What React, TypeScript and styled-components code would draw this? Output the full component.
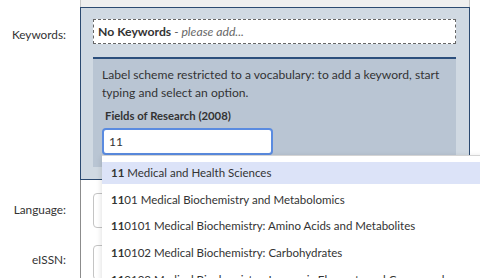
import styled, { createGlobalStyle } from 'styled-components';

const GlobalStyle = createGlobalStyle`
  body {
    margin: 0;
    background: #fff;
    font-family: Lato, "Open Sans", Arial, sans-serif;
    font-size: 12px;
    color: #333;
  }
`;

const Form = styled.div`
  display: grid;
  grid-template-columns: 80px 390px;
  grid-template-rows: 7px 173px 52px 52px;
  width: 480px;
  height: 278px;
  overflow: hidden;
`;

const Label = styled.div<{ top: number }>`
  text-align: right;
  padding-right: 14px;
  padding-top: ${(p) => p.top}px;
  line-height: 18px;
  font-size: 11.8px;
  color: #333;
`;

const TopStrip = styled.div`
  background: #efefef;
  border-left: 1px solid #c8c8c8;
  border-right: 1px solid #c8c8c8;
`;

const Panel = styled.div`
  position: relative;
  background: #d0d9e2;
  border: 1px solid #2c4a70;
  padding: 11px 13px 12px 12px;
`;

const Placeholder = styled.div`
  height: 23px;
  line-height: 23px;
  background: #fff;
  border: 1px dashed #666;
  padding-left: 4px;
  font-size: 12.2px;
  b {
    font-weight: 700;
    color: #333;
  }
  i {
    color: #666;
  }
`;

const Scheme = styled.div`
  margin-top: 13px;
  background: #b9c5d3;
  border-top: 2px solid #2c4f7c;
  padding: 7px 9px 12px 9px;
`;

const Help = styled.p`
  margin: 0;
  line-height: 18px;
  font-size: 12.1px;
  color: #333;
`;

const SchemeName = styled.div`
  margin-top: 5px;
  padding-left: 3px;
  font-weight: 700;
  font-size: 11.3px;
  line-height: 18px;
`;

const SearchBox = styled.div`
  margin-top: 3px;
  width: 162px;
  height: 23px;
  line-height: 23px;
  border: 2px solid #5a8be0;
  border-radius: 4px;
  background: #fff;
  padding-left: 5px;
  font-size: 12px;
`;

const Menu = styled.ul`
  position: absolute;
  left: 21px;
  top: 147px;
  width: 400px;
  margin: 0;
  padding: 6px 0 0 0;
  list-style: none;
  background: #fff;
  border-top: 1px solid #d4d4d4;
  box-shadow: 0 2px 6px rgba(0, 0, 0, 0.15);
  z-index: 2;
`;

const Option = styled.li<{ active?: boolean }>`
  height: 22px;
  line-height: 22px;
  margin-bottom: 4.7px;
  padding-left: 9px;
  font-size: 11.5px;
  white-space: nowrap;
  background: ${(p) => (p.active ? '#dce3f8' : 'transparent')};
  b {
    font-weight: 700;
  }
`;

const Field = styled.div`
  border-left: 1px solid #8c8c8c;
  padding: 13px 0 0 12px;
`;

const Input = styled.div`
  width: 220px;
  height: 33px;
  border: 1px solid #c4c4c4;
  border-radius: 4px;
  background: #fff;
`;

const options = [
  'Medical and Health Sciences',
  '01 Medical Biochemistry and Metabolomics',
  '0101 Medical Biochemistry: Amino Acids and Metabolites',
  '0102 Medical Biochemistry: Carbohydrates',
  '0103 Medical Biochemistry: Inorganic Elements and Compounds',
];

export default function App() {
  return (
    <>
      <GlobalStyle />
      <Form>
        <div />
        <TopStrip />

        <Label top={19}>Keywords:</Label>
        <Panel>
          <Placeholder>
            <b>No Keywords</b> <i>- please add...</i>
          </Placeholder>
          <Scheme>
            <Help>
              Label scheme restricted to a vocabulary: to add a keyword, start
              typing and select an option.
            </Help>
            <SchemeName>Fields of Research (2008)</SchemeName>
            <SearchBox>11</SearchBox>
          </Scheme>
          <Menu>
            {options.map((o, i) => (
              <Option key={o} active={i === 0}>
                <b>11</b>
                {i === 0 ? ' ' : ''}
                {o}
              </Option>
            ))}
          </Menu>
        </Panel>

        <Label top={21}>Language:</Label>
        <Field>
          <Input />
        </Field>

        <Label top={19}>eISSN:</Label>
        <Field>
          <Input />
        </Field>
      </Form>
    </>
  );
}
